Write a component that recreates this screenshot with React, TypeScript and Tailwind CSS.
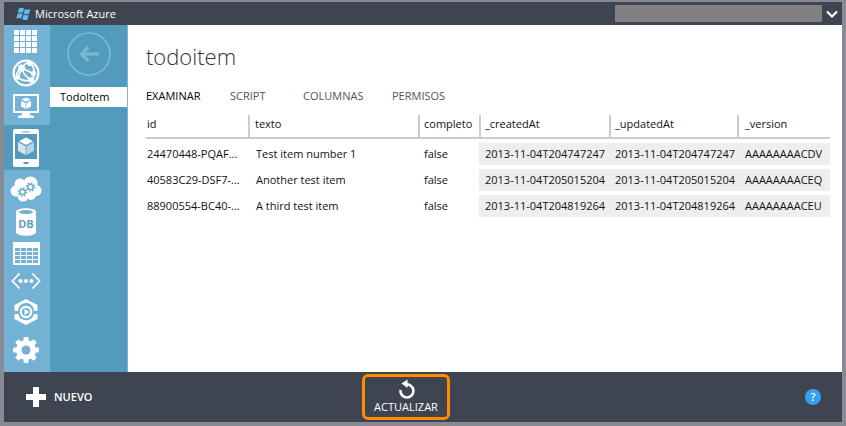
import React from "react";

const GridIcon = () => (
  <svg width="24" height="24" viewBox="0 0 24 24" fill="#fff" aria-hidden="true">
    {[0, 6, 12, 18].map((y) =>
      [0, 6, 12, 18].map((x) => <rect key={`${x}-${y}`} x={x} y={y} width="5" height="5" />)
    )}
  </svg>
);

const GlobeIcon = () => (
  <svg width="28" height="28" viewBox="0 0 28 28" fill="none" stroke="#fff" aria-hidden="true">
    <circle cx="14" cy="14" r="12.4" strokeWidth="2.200" />
    <path d="M10 9L22 15M10 9Q11 17 20 21M10 9Q4 12 4 20M6 18L10 9M17 3Q12 5 10 9M22 15Q22 19 20 21M18 4Q23 8 22 15M6 18Q10 23 19 21" strokeWidth="1.8" />
    <g fill="#fff" stroke="none">
      <circle cx="9.5" cy="9" r="3.400" />
      <circle cx="21.500" cy="14.500" r="2.600" />
      <circle cx="19" cy="21" r="2.800" />
      <circle cx="6" cy="18.5" r="2.200" />
      <circle cx="18" cy="4.500" r="2.600" />
    </g>
  </svg>
);

const MonitorIcon = () => (
  <svg width="26" height="24" viewBox="0 0 26 24" fill="none" aria-hidden="true">
    <path fill="#fff" fillRule="evenodd" d="M0 0h26v19h-9v2l4 1v2H5v-2l4-1v-2H0zM2 2v15h22V2z" />
    <path fill="#fff" d="M13 3.500l4.500 2-4.500 2.300-4.500-2.300zM8 6.800l4.600 2.400V15L8 12.600zM18 6.800l-4.600 2.400V15l4.600-2.400z" />
  </svg>
);

const PhoneIcon = () => (
  <svg width="26" height="38" viewBox="0 0 26 38" aria-hidden="true">
    <rect width="26" height="38" rx="2" fill="#fff" />
    <rect x="2" y="5" width="22" height="25" fill="#529bbc" />
    <rect x="9" y="2" width="8" height="1.500" fill="#9cc6da" />
    <rect x="10.500" y="33" width="5" height="2" fill="#529bbc" />
    <path fill="#fff" d="M13 8.500l7 3.800-7 3.800-7-3.800z" />
    <path fill="#d2e6ef" d="M5 13l7.600 4.200V26L5 21.700z" />
    <path fill="#b5d5e3" d="M21 13l-7.600 4.200V26l7.600-4.300z" />
  </svg>
);

const CloudIcon = () => (
  <svg width="32" height="26" viewBox="0 0 32 26" aria-hidden="true">
    <g fill="#fff">
      <circle cx="10" cy="8" r="5.500" />
      <circle cx="20.500" cy="7.500" r="7" />
      <circle cx="6" cy="15" r="5.500" />
      <circle cx="26" cy="14.500" r="5.500" />
      <circle cx="13" cy="20" r="5.500" />
      <circle cx="21" cy="19" r="5" />
      <circle cx="15" cy="14" r="8" />
    </g>
    <g fill="none" stroke="#64a8cb">
      <circle cx="12.500" cy="16" r="2.600" strokeWidth="1.400" />
      <circle cx="12.500" cy="16" r="4" strokeWidth="1.500" strokeDasharray="1.500 1.640" />
      <circle cx="20.500" cy="11" r="2.600" strokeWidth="1.400" />
      <circle cx="20.500" cy="11" r="4" strokeWidth="1.500" strokeDasharray="1.500 1.640" />
    </g>
  </svg>
);

const DatabaseIcon = () => (
  <svg width="20" height="28" viewBox="0 0 20 28" aria-hidden="true">
    <path fill="#fff" d="M0 4C0-1 20-1 20 4v20c0 5-20 5-20 0z" />
    <ellipse cx="10" cy="4" rx="7" ry="2" fill="#73b2d4" />
    <text x="10" y="20" textAnchor="middle" fill="#5b9fc2" fontSize="11" fontWeight="700" fontFamily="Open Sans, sans-serif">
      DB
    </text>
  </svg>
);

const TableIcon = () => (
  <svg width="27" height="23" viewBox="0 0 27 23" aria-hidden="true">
    <rect width="27" height="23" fill="#fff" />
    {[6, 10, 14, 18].map((y) =>
      [2, 8, 14, 20].map((x) => <rect key={`${x}-${y}`} x={x} y={y} width="5" height="3" fill="#73b2d4" />)
    )}
  </svg>
);

const CodeIcon = () => (
  <svg width="30" height="18" viewBox="0 0 30 18" aria-hidden="true">
    <path d="M8.500 1.500L1.500 9l7 7.500M21.500 1.500l7 7.500-7 7.500" fill="none" stroke="#fff" strokeWidth="1.800" />
    <g fill="#fff">
      <circle cx="9.500" cy="9" r="2" />
      <circle cx="15" cy="9" r="2" />
      <circle cx="20.500" cy="9" r="2" />
    </g>
  </svg>
);

const MediaIcon = () => (
  <svg width="24" height="26" viewBox="0 0 24 26" aria-hidden="true">
    <path fill="#fff" d="M12 0l11.500 6v6H20A8 8 0 0 0 4 12H.500V6zM12 26L.500 20v-5H4.200a8 8 0 0 0 15.600 0h3.700v5z" />
    <circle cx="12" cy="13" r="5.200" fill="none" stroke="#fff" strokeWidth="2.200" />
    <path fill="#fff" d="M10.500 10l5 3-5 3z" />
  </svg>
);

const GearIcon = () => (
  <svg width="28" height="28" viewBox="0 0 28 28" aria-hidden="true">
    <g fill="#fff">
      <g>
        <rect x="11.500" y="1" width="5" height="26" rx="1" />
        <rect x="11.500" y="1" width="5" height="26" rx="1" transform="rotate(45 14 14)" />
        <rect x="11.500" y="1" width="5" height="26" rx="1" transform="rotate(90 14 14)" />
        <rect x="11.500" y="1" width="5" height="26" rx="1" transform="rotate(135 14 14)" />
      </g>
      <circle cx="14" cy="14" r="10" />
    </g>
    <circle cx="14" cy="14" r="4.500" fill="#73b2d4" />
  </svg>
);

const services = [
  { label: "Todos los elementos", Icon: GridIcon, cell: "h-[34px]" },
  { label: "Sitios web", Icon: GlobeIcon, cell: "h-7" },
  { label: "Máquinas virtuales", Icon: MonitorIcon, cell: "h-[38px]" },
  { label: "Servicios móviles", Icon: PhoneIcon, cell: "h-[45px] bg-[#529bbc]" },
  { label: "Servicios en la nube", Icon: CloudIcon, cell: "h-[38px]" },
  { label: "Bases de datos", Icon: DatabaseIcon, cell: "h-7" },
  { label: "Almacenamiento", Icon: TableIcon, cell: "h-[34px]" },
  { label: "Redes", Icon: CodeIcon, cell: "h-[22px]" },
  { label: "Multimedia", Icon: MediaIcon, cell: "h-10" },
  { label: "Configuración", Icon: GearIcon, cell: "h-9" },
];

const tabs = [
  { label: "EXAMINAR", cell: "w-[84px] text-black" },
  { label: "SCRIPT", cell: "w-[73px] text-[#555]" },
  { label: "COLUMNAS", cell: "w-[89px] text-[#555]" },
  { label: "PERMISOS", cell: "text-[#555]" },
];

const columns = [
  { label: "id", cell: "w-[102px] pl-px" },
  { label: "texto", cell: "border-l-2 pl-[5px]" },
  { label: "completo", cell: "w-[61px] border-l-2 pl-1" },
  { label: "_createdAt", cell: "w-[130px] border-l-2 pl-1" },
  { label: "_updatedAt", cell: "w-[128px] border-l-2 pl-1" },
  { label: "_version", cell: "w-[93px] border-l-2 pl-[6px]" },
];

const rows = [
  ["24470448-PQAF...", "Test item number 1", "false", "2013-11-04T204747247", "2013-11-04T204747247", "AAAAAAAACDV"],
  ["40583C29-DSF7-...", "Another test item", "false", "2013-11-04T205015204", "2013-11-04T205015204", "AAAAAAAACEQ"],
  ["88900554-BC40-...", "A third test item", "false", "2013-11-04T204819264", "2013-11-04T204819264", "AAAAAAAACEU"],
];

const cellStyles = [
  "pl-px",
  "pl-2",
  "pl-[6px]",
  "bg-[#eee] pl-[6px]",
  "bg-[#eee] pl-[6px]",
  "bg-[#eee] pl-2",
];

export default function App() {
  return (
    <div className="flex min-h-screen flex-col border-t-2 border-r-4 border-b-4 border-l-4 border-[#868a94] bg-white font-['Open_Sans','Noto_Sans',sans-serif] text-[11px] leading-4 text-[#111]">
      <header className="flex h-[23px] items-center bg-[#3e4550] pr-1 pl-3 text-white">
        <svg width="15" height="14" viewBox="0 0 15 14" fill="#62bdf0" aria-hidden="true">
          <path d="M3 1.500Q5.500 0 8 1.500L6.800 6Q4.500 4.600 1.800 6zM8.800 2q2.500 1.500 5.400 0L13 6.800q-2.800 1.200-5.200-.200zM1.600 7Q4.200 5.600 6.500 7l-1.300 4.800Q3 10.400.200 11.800zM7.500 7.500q2.400 1.500 5.200.300L11.500 12.500q-3 1.200-5.200-.200z" />
        </svg>
        <span className="ml-1">Microsoft Azure</span>
        <div className="ml-auto h-[17px] w-[207px] bg-[#808080]" />
        <button type="button" aria-label="Cuenta" className="ml-1 flex w-3 justify-center">
          <svg width="12" height="8" viewBox="0 0 12 8" aria-hidden="true">
            <path d="M1 1.500L6 6.500l5-5" fill="none" stroke="#fff" strokeWidth="2.200" />
          </svg>
        </button>
      </header>

      <div className="flex flex-1">
        <nav aria-label="Servicios" className="flex w-[46px] shrink-0 flex-col bg-[#73b2d4]">
          {services.map(({ label, Icon, cell }) => (
            <button key={label} type="button" aria-label={label} className={`flex w-full items-center justify-center pr-[2px] ${cell}`}>
              <Icon />
            </button>
          ))}
        </nav>

        <aside className="flex w-[78px] shrink-0 flex-col border-r border-[#7ab5d5] bg-[#529bbc]">
          <button type="button" aria-label="Atrás" className="flex h-[62px] items-center justify-center pb-1">
            <svg width="44" height="44" viewBox="0 0 44 44" fill="none" stroke="#7db9d6" aria-hidden="true">
              <circle cx="22" cy="22" r="21" strokeWidth="1.600" />
              <path d="M32 22H15M21.500 15L14.500 22l7 7" strokeWidth="3.200" />
            </svg>
          </button>
          <a href="#todoitem" className="block bg-white py-[2px] pl-[10px] text-black">
            TodoItem
          </a>
        </aside>

        <main className="min-w-0 flex-1 pr-3 pl-[18px]">
          <h1 className="pt-[15px] text-[22px] leading-8 font-light text-[#333]">todoitem</h1>
          <div role="tablist" className="mt-4 flex">
            {tabs.map((tab, i) => (
              <button key={tab.label} type="button" role="tab" aria-selected={i === 0} className={`text-left ${tab.cell}`}>
                {tab.label}
              </button>
            ))}
          </div>
          <table className="mt-[11px] w-full table-fixed border-separate border-spacing-0">
            <thead>
              <tr>
                {columns.map((col) => (
                  <th key={col.label} scope="col" className={`h-6 border-b-2 border-[#ccc] p-0 pb-1 text-left font-normal ${col.cell}`}>
                    {col.label}
                  </th>
                ))}
              </tr>
            </thead>
            <tbody>
              <tr aria-hidden="true">
                <td colSpan={6} className="h-[2px] p-0" />
              </tr>
              {rows.map((row) => (
                <tr key={row[0]}>
                  {row.map((value, i) => (
                    <td key={i} className="px-0 py-[2px]">
                      <div className={`py-[3px] whitespace-nowrap ${cellStyles[i]}`}>{value}</div>
                    </td>
                  ))}
                </tr>
              ))}
            </tbody>
          </table>
        </main>
      </div>

      <footer className="flex h-[50px] items-center bg-[#3e4550] pr-[21px] pl-[22px] text-white">
        <div className="flex w-[336px] items-center">
          <button type="button" className="flex items-center gap-2 font-semibold">
            <svg width="20" height="20" viewBox="0 0 20 20" aria-hidden="true">
              <path d="M7 0h6v7h7v6h-7v7H7v-7H0V7h7z" fill="#fff" />
            </svg>
            NUEVO
          </button>
        </div>
        <button type="button" className="flex h-[46px] w-[88px] flex-col items-center justify-center rounded-md border-3 border-[#ff8c00]">
          <svg width="18" height="20" viewBox="0 0 18 20" aria-hidden="true">
            <path d="M9 5.500A6.500 6.500 0 1 1 3.500 11" fill="none" stroke="#fff" strokeWidth="2.600" />
            <path d="M4.500 4.500L10.500 .5v8.500z" fill="#fff" />
          </svg>
          ACTUALIZAR
        </button>
        <button type="button" aria-label="Ayuda" className="ml-auto flex size-4 items-center justify-center rounded-full bg-[#35a0f0] font-semibold">
          ?
        </button>
      </footer>
    </div>
  );
}
